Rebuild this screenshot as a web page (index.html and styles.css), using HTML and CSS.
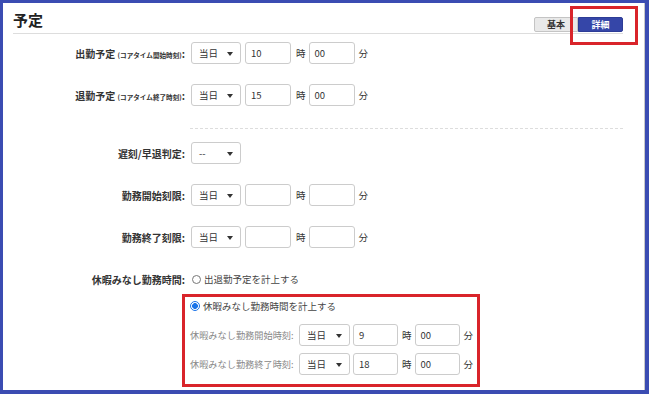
FILE: index.html
```html
<html>
	<head>
		<title>予定</title>
		<meta name="viewport" content="width=device-width, initial-scale=1">
		<link rel="stylesheet" href="styles.css">
	</head>
	<body>
		<div class="frame">
			<div class="panel-head">
				<h2 class="panel-title">予定</h2>
				<div class="tabs">
					<button class="tab">基本</button>
					<button class="tab tab-active">詳細</button>
					<span class="mark-tab"></span>
				</div>
			</div>
			<div class="form">
				<div class="row">
					<div class="row-label">出勤予定 <small>(コアタイム開始時刻)</small>:</div>
					<div class="select">当日</div>
					<div class="input">10</div>
					<span class="unit">時</span>
					<div class="input">00</div>
					<span class="unit unit-last">分</span>
				</div>
				<div class="row">
					<div class="row-label">退勤予定 <small>(コアタイム終了時刻)</small>:</div>
					<div class="select">当日</div>
					<div class="input">15</div>
					<span class="unit">時</span>
					<div class="input">00</div>
					<span class="unit unit-last">分</span>
				</div>
				<div class="divider"></div>
				<div class="row">
					<div class="row-label">遅刻/早退判定:</div>
					<div class="select">--</div>
				</div>
				<div class="row">
					<div class="row-label">勤務開始刻限:</div>
					<div class="select">当日</div>
					<div class="input"></div>
					<span class="unit">時</span>
					<div class="input"></div>
					<span class="unit unit-last">分</span>
				</div>
				<div class="row">
					<div class="row-label">勤務終了刻限:</div>
					<div class="select">当日</div>
					<div class="input"></div>
					<span class="unit">時</span>
					<div class="input"></div>
					<span class="unit unit-last">分</span>
				</div>
				<div class="row row-tight">
					<div class="row-label">休暇みなし勤務時間:</div>
					<span class="radio"></span>
					<span class="radio-text">出退勤予定を計上する</span>
				</div>
				<div class="highlight">
					<div class="radio-line">
						<span class="radio radio-on"></span>
						<span class="radio-text">休暇みなし勤務時間を計上する</span>
					</div>
					<div class="sub-row sub-first">
						<div class="sub-label">休暇みなし勤務開始時刻:</div>
						<div class="select">当日</div>
						<div class="input">9</div>
						<span class="unit">時</span>
						<div class="input">00</div>
						<span class="unit unit-last">分</span>
					</div>
					<div class="sub-row">
						<div class="sub-label">休暇みなし勤務終了時刻:</div>
						<div class="select">当日</div>
						<div class="input">18</div>
						<span class="unit">時</span>
						<div class="input">00</div>
						<span class="unit unit-last">分</span>
					</div>
				</div>
			</div>
		</div>
	</body>
</html>
```

FILE: styles.css
```css
*{
	box-sizing: border-box;
}
body{
	margin: 0;
	padding: 0;
	background-color: #fff;
	color: #333;
	font-family: "Noto Sans CJK JP", "Noto Sans", sans-serif;
}
.frame{
	width: 649px;
	height: 394px;
	padding: 0 22px 0 10px;
	border: 3px solid #3b4cb2;
	border-right-width: 4px;
	border-bottom-width: 4px;
	box-shadow: inset -1px 0 #c8c8c8;
	overflow: hidden;
}
.panel-head{
	display: flex;
	justify-content: space-between;
	align-items: flex-end;
	height: 31px;
	border-bottom: 1px solid #ddd;
}
.panel-title{
	margin: 0 0 3px 0;
	font-size: 15px;
	line-height: 20px;
	font-weight: bold;
	color: #222;
}
.tabs{
	position: relative;
	display: flex;
}
.tab{
	width: 44px;
	height: 15px;
	padding: 0;
	border: 1px solid #c4c4c4;
	border-radius: 2px 0 0 2px;
	background-color: #e9e9e9;
	color: #333;
	font-family: "Noto Sans CJK JP", sans-serif;
	font-size: 9px;
	font-weight: bold;
	line-height: 13px;
}
.tab-active{
	width: 45px;
	margin-bottom: 1px;
	border-color: #2d3c96;
	border-radius: 0 2px 2px 0;
	background-color: #3546a8;
	color: #fff;
}
.mark-tab{
	position: absolute;
	left: 36px;
	top: -11px;
	width: 68px;
	height: 39px;
	border: 3px solid #d9242a;
}
.form{
	margin-top: 8px;
}
.row{
	display: flex;
	align-items: center;
	height: 22px;
	margin-bottom: 20px;
}
.row-tight{
	margin-bottom: 4px;
}
.row-label{
	width: 172px;
	margin-right: 6px;
	text-align: right;
	white-space: nowrap;
	font-size: 10px;
	font-weight: bold;
	color: #333;
}
.row-label small{
	font-size: 6.6px;
}
.select{
	position: relative;
	width: 50px;
	height: 22px;
	margin-right: 4px;
	padding-left: 7px;
	border: 1px solid #ccc;
	border-radius: 3px;
	font-size: 9.5px;
	line-height: 20px;
	color: #333;
}
.select::after{
	content: "";
	position: absolute;
	right: 7px;
	top: 9px;
	border-left: 3px solid transparent;
	border-right: 3px solid transparent;
	border-top: 4px solid #333;
}
.input{
	width: 46px;
	height: 22px;
	padding-left: 5px;
	border: 1px solid #ccc;
	border-radius: 3px;
	font-size: 9.5px;
	line-height: 20px;
	color: #333;
}
.unit{
	margin: 0 3px 0 5px;
	font-size: 9.5px;
	color: #333;
}
.unit-last{
	margin-left: 4px;
}
.divider{
	margin: 22px 0 13px 177px;
	border-top: 1px dashed #ddd;
}
.radio{
	width: 9px;
	height: 9px;
	margin: 0 3px 0 1px;
	border: 1px solid #777;
	border-radius: 50%;
}
.radio-on{
	width: 10px;
	height: 10px;
	margin-left: 0;
	border-color: #1a73e8;
	background: radial-gradient(circle, #1a73e8 2.6px, #fff 3.2px);
}
.radio-text{
	font-size: 9.5px;
	color: #444;
}
.highlight{
	width: 298px;
	margin-left: 169px;
	padding: 1px 0 9px 5px;
	border: 3px solid #d9242a;
}
.radio-line{
	display: flex;
	align-items: center;
	height: 16px;
}
.sub-row{
	display: flex;
	align-items: center;
	height: 22px;
	margin-top: 7px;
}
.sub-first{
	margin-top: 10px;
}
.sub-label{
	width: 105px;
	margin-right: 4px;
	white-space: nowrap;
	font-size: 9.2px;
	color: #888;
}
.sub-row .select{
	width: 51px;
	margin-right: 3px;
}
.sub-row .input{
	width: 45px;
}
.sub-row .unit{
	margin: 0 3px 0 4px;
}
.sub-row .unit-last{
	margin-left: 4px;
}
```
